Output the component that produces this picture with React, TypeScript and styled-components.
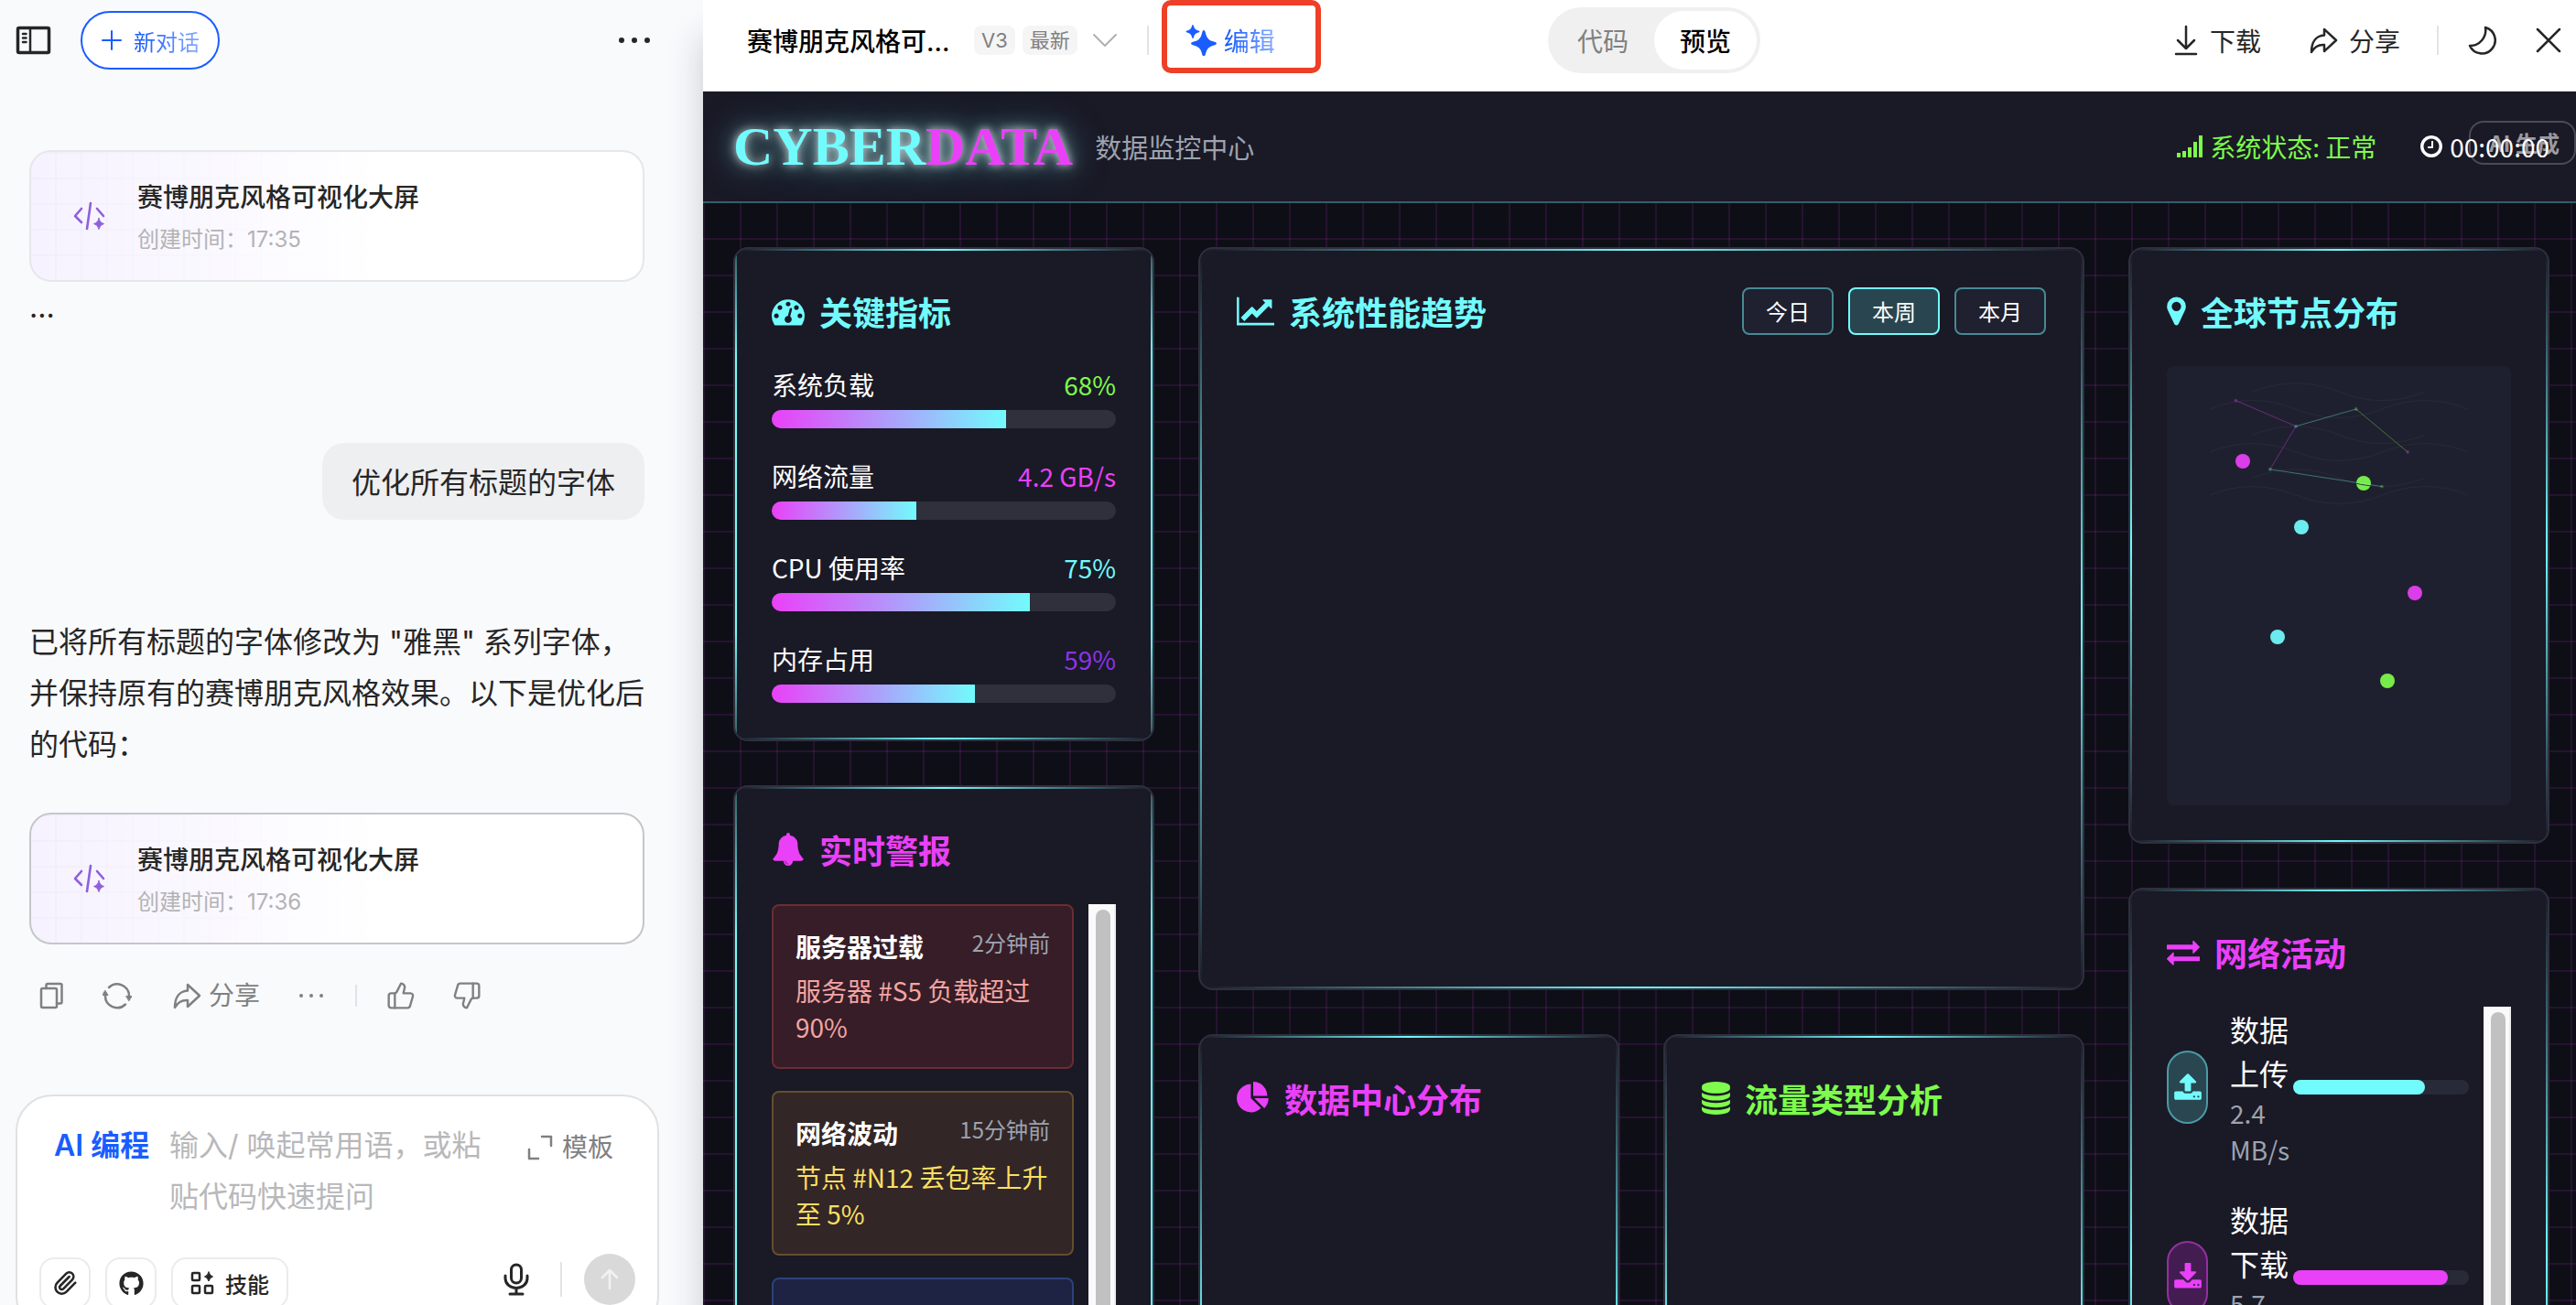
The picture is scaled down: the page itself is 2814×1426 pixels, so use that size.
import React from "react";
import styled, { createGlobalStyle } from "styled-components";
import { Paperclip, ThumbsDown, ThumbsUp } from "lucide-react";
import { FaGithub } from "react-icons/fa";

const UI_FONT = `Inter, "Noto Sans CJK SC", sans-serif`;
const DASH_FONT = `"Noto Sans CJK SC", "Noto Sans", sans-serif`;

const c = {
  cyan: "#72fbfd",
  pink: "#ea40f8",
  green: "#7efb4c",
  purple: "#8b33e8",
  card: "#1a1926",
  blue: "#1a5dff",
};

const GlobalStyle = createGlobalStyle`
  *, *::before, *::after { box-sizing: border-box; }
  body { margin: 0; font-family: ${UI_FONT}; color: #262626; overflow: hidden; }
  button, textarea { font: inherit; color: inherit; }
  button { background: none; border: 0; padding: 0; cursor: pointer; }
  h1, h2, h3, p, ul { margin: 0; padding: 0; }
  ul { list-style: none; }
  svg { display: block; flex: none; }
`;

const Shell = styled.div`
  display: flex;
  height: 100vh;
  overflow: hidden;
  background: #f9fafc;
`;

/* ---------- chat column ---------- */

const Chat = styled.aside`
  flex: 0 0 768px;
  display: flex;
  flex-direction: column;
`;

const ChatBar = styled.header`
  flex: none;
  display: flex;
  align-items: center;
  gap: 32px;
  height: 88px;
  padding: 0 58px 0 16px;
`;

const NewChat = styled.button`
  display: flex;
  align-items: center;
  gap: 12px;
  height: 64px;
  padding: 0 20px;
  border: 2px solid ${c.blue};
  border-radius: 32px;
  background: #fff;
  color: ${c.blue};
  font-size: 24px;
`;

const FadeText = styled.span`
  background: linear-gradient(90deg, ${c.blue} 10%, #86abff);
  background-clip: text;
  -webkit-background-clip: text;
  color: transparent;
`;

const PushRight = styled.div`
  margin-left: auto;
  display: flex;
`;

const Messages = styled.div`
  flex: none;
  display: flex;
  flex-direction: column;
  padding: 76px 64px 0 32px;
  font-size: 32px;
  line-height: 56px;
`;

const FileCard = styled.button<{ $active?: boolean }>`
  display: flex;
  align-items: center;
  gap: 34px;
  height: 144px;
  padding: 0 46px;
  border: 2px solid ${(p) => (p.$active ? "#c5c6c9" : "#e6e7ea")};
  border-radius: 24px;
  background:
    linear-gradient(90deg, rgba(255, 255, 255, 0) 0, #fff 380px),
    repeating-linear-gradient(90deg, transparent 0 26px, #f1eefb 26px 28px),
    repeating-linear-gradient(0deg, transparent 0 26px, #f1eefb 26px 28px),
    #f6f2ff;
  background-clip: padding-box;
  text-align: left;
`;

const FileText = styled.span`
  display: flex;
  flex-direction: column;
  gap: 8px;
  padding-top: 4px;
`;

const FileName = styled.strong`
  font-size: 28px;
  line-height: 40px;
  font-weight: 500;
`;

const FileMeta = styled.span`
  font-size: 24px;
  line-height: 36px;
  color: #b3b3b5;
`;

const Bubble = styled.p`
  align-self: flex-end;
  margin-top: 120px;
  padding: 16px 32px 12px;
  border-radius: 24px;
  background: #eeeff1;
`;

const Reply = styled.p`
  margin: 106px 0 46px;
`;

const MessageActions = styled.div`
  display: flex;
  align-items: center;
  gap: 24px;
  height: 56px;
  margin-top: 28px;
  color: #808080;
`;

const IconButton = styled.button`
  display: flex;
  align-items: center;
  justify-content: center;
  min-width: 48px;
  height: 48px;
`;

const ShareSmall = styled(IconButton)`
  gap: 8px;
  padding: 0 8px 0 12px;
  font-size: 28px;
`;

const Divider = styled.span<{ $h: number }>`
  flex: none;
  width: 2px;
  height: ${(p) => p.$h}px;
  background: #e2e3e6;
`;

const Composer = styled.form`
  flex: none;
  display: flex;
  flex-direction: column;
  gap: 34px;
  margin: 80px 48px 0 17px;
  padding: 26px 24px 24px;
  border: 2px solid #e0e1e3;
  border-radius: 40px;
  background: #fff;
`;

const ComposerInput = styled.div`
  display: flex;
  align-items: flex-start;
  padding: 0 24px 0 16px;
  font-size: 32px;
  line-height: 56px;
`;

const ModeLabel = styled.label`
  flex: none;
  width: 126px;
  color: ${c.blue};
  font-weight: 600;
  white-space: nowrap;
`;

const Prompt = styled.textarea`
  width: 360px;
  height: 112px;
  padding: 0;
  border: 0;
  outline: 0;
  resize: none;
  overflow: hidden;
  background: transparent;
  &::placeholder { color: #b8b8ba; opacity: 1; }
`;

const Template = styled.button`
  display: flex;
  align-items: center;
  gap: 8px;
  margin-left: auto;
  color: #808080;
  font-size: 28px;
  line-height: 60px;
  white-space: nowrap;
`;

const ComposerTools = styled.div`
  display: flex;
  align-items: flex-end;
  gap: 16px;
  height: 60px;
`;

const ToolButton = styled.button<{ $wide?: boolean }>`
  display: flex;
  align-items: center;
  justify-content: center;
  gap: 12px;
  width: ${(p) => (p.$wide ? 128 : 56)}px;
  height: 56px;
  border: 2px solid #ebebed;
  border-radius: 16px;
  font-size: 24px;
  font-weight: 500;
`;

const VoiceGroup = styled.div`
  align-self: flex-start;
  display: flex;
  align-items: center;
  gap: 24px;
  margin-left: auto;
`;

const Send = styled.button`
  display: flex;
  align-items: center;
  justify-content: center;
  width: 56px;
  height: 56px;
  border-radius: 50%;
  background: #d9d9d9;
  color: #f2f2f2;
`;

/* ---------- preview column ---------- */

const Workspace = styled.main`
  position: relative;
  flex: 1;
  min-width: 0;
  display: flex;
  flex-direction: column;
  box-shadow: 0 40px 36px rgba(30, 36, 60, 0.22);
`;

const Toolbar = styled.header`
  flex: none;
  display: grid;
  grid-template-columns: 1fr auto 1fr;
  align-items: center;
  height: 100px;
  padding: 0 16px 12px 48px;
  border-bottom: 1px solid #e8e9ee;
  background: #fff;
  font-size: 28px;
`;

const ToolbarSide = styled.div<{ $end?: boolean }>`
  display: flex;
  align-items: center;
  height: 88px;
  justify-content: ${(p) => (p.$end ? "flex-end" : "flex-start")};
  gap: ${(p) => (p.$end ? 32 : 8)}px;
`;

const DocTitle = styled.h1`
  width: 240px;
  color: #000;
  font-size: 28px;
  font-weight: 500;
`;

const Tag = styled.span`
  padding: 0 8px;
  border-radius: 8px;
  background: #f5f5f5;
  color: #808080;
  font-size: 22px;
  line-height: 32px;
`;

const Chevron = styled.button`
  margin: 0 24px 0 8px;
  padding: 4px 0;
  color: #b0b0b0;
`;

const EditButton = styled.button`
  align-self: flex-start;
  display: flex;
  align-items: center;
  gap: 8px;
  width: 174px;
  height: 80px;
  margin-left: 6px;
  padding: 8px 0 0 20px;
  border: 6px solid #ee4027;
  border-radius: 10px;
  color: ${c.blue};
`;

const Segmented = styled.div`
  display: flex;
  padding: 4px;
  border-radius: 36px;
  background: #f0f0f0;
`;

const Segment = styled.button<{ $on?: boolean }>`
  width: 112px;
  height: 64px;
  border-radius: 32px;
  background: ${(p) => (p.$on ? "#fff" : "transparent")};
  color: ${(p) => (p.$on ? "#000" : "#808080")};
  font-weight: ${(p) => (p.$on ? 500 : 400)};
`;

const ActionButton = styled.button`
  display: flex;
  align-items: center;
  gap: 12px;
  margin-left: 12px;
  padding-right: 8px;
`;

const CloseButton = styled.button`
  margin-left: 10px;
`;

const Preview = styled.section`
  position: relative;
  flex: 1;
  min-height: 0;
  overflow: hidden;
  background-color: #0e0e17;
  background-image:
    linear-gradient(rgba(234, 64, 248, 0.11) 2px, transparent 2px),
    linear-gradient(90deg, rgba(234, 64, 248, 0.11) 2px, transparent 2px);
  background-size: 40px 40px;
  color: #fff;
  font-family: ${DASH_FONT};
  font-size: 28px;
  line-height: 40px;
`;

const DashHeader = styled.header`
  display: flex;
  align-items: center;
  height: 122px;
  padding: 0 29px 0 33px;
  border-bottom: 2px solid #355e6c;
  background: ${c.card};
`;

const Logo = styled.h2`
  margin-right: 24px;
  color: ${c.cyan};
  font-family: "Liberation Serif", serif;
  font-size: 60px;
  line-height: 72px;
  font-weight: 700;
  text-shadow:
    0 0 10px rgba(255, 255, 255, 0.7),
    0 0 20px rgba(190, 255, 255, 0.5),
    0 0 40px rgba(114, 251, 253, 0.55);
  span { color: ${c.pink}; }
`;

const Subtitle = styled.span`
  color: #9ca3af;
  font-size: 29px;
`;

const StatusGroup = styled.div`
  position: relative;
  z-index: 1;
  display: flex;
  gap: 48px;
  margin-left: auto;
`;

const Status = styled.span<{ $color: string }>`
  display: flex;
  align-items: center;
  gap: 8px;
  color: ${(p) => p.$color};
`;

const AiBadge = styled.span`
  position: absolute;
  top: 32px;
  right: 0;
  height: 48px;
  padding: 0 16px 0 20px;
  border: 2px solid #4b4b58;
  border-radius: 16px;
  color: #9b9ba1;
  font-size: 24px;
  font-weight: 700;
  line-height: 44px;
`;

const Grid = styled.div`
  display: grid;
  grid-template-columns: 1fr calc(50% - 24px) 1fr;
  gap: 48px;
  align-items: start;
  padding: 48px 29px 48px 33px;
`;

const Column = styled.div`
  display: flex;
  flex-direction: column;
  gap: 48px;
  min-width: 0;
`;

const Pair = styled.div`
  display: grid;
  grid-template-columns: 1fr 1fr;
  gap: 48px;
`;

const Card = styled.section<{ $solid?: boolean }>`
  --h: linear-gradient(90deg, transparent, ${c.cyan}, transparent);
  --v: ${(p) =>
    p.$solid
      ? `linear-gradient(rgba(114,251,253,.3), ${c.cyan} 22%, ${c.cyan} 78%, rgba(114,251,253,.3))`
      : `linear-gradient(transparent, ${c.cyan}, transparent)`};
  min-width: 0;
  padding: 40px;
  border: 2px solid #2f2f3d;
  border-radius: 16px;
  background:
    var(--h) top / 100% 2px no-repeat,
    var(--h) bottom / 100% 2px no-repeat,
    var(--v) left / 2px 100% no-repeat,
    var(--v) right / 2px 100% no-repeat,
    ${c.card};
  background-origin: padding-box;
`;

const CardHead = styled.div`
  display: flex;
  align-items: center;
  height: 56px;
  margin-bottom: 32px;
`;

const CardTitle = styled.h3<{ $color: string }>`
  display: flex;
  align-items: center;
  gap: 16px;
  color: ${(p) => p.$color};
  font-size: 36px;
  line-height: 56px;
  font-weight: 700;
`;

const MetricList = styled.ul`
  display: flex;
  flex-direction: column;
  gap: 32px;
`;

const MetricLabel = styled.div<{ $color: string }>`
  display: flex;
  justify-content: space-between;
  margin-bottom: 8px;
  span:last-child { color: ${(p) => p.$color}; }
`;

const Track = styled.div`
  height: 20px;
  overflow: hidden;
  border-radius: 10px;
  background: #302f3c;
`;

const Fill = styled.div`
  height: 100%;
  background: linear-gradient(90deg, ${c.pink}, ${c.cyan});
`;

const Scroller = styled.div<{ $h: number }>`
  display: flex;
  gap: 16px;
  height: ${(p) => p.$h}px;
  overflow: hidden;
`;

const ScrollBody = styled.ul<{ $gap: number }>`
  flex: 1;
  min-width: 0;
  display: flex;
  flex-direction: column;
  gap: ${(p) => p.$gap}px;
`;

const ScrollTrack = styled.div`
  flex: 0 0 30px;
  padding: 6px 4px 6px 8px;
  border-right: 2px solid #ececec;
  background: #fafafa;
`;

const ScrollThumb = styled.div`
  width: 16px;
  height: 92%;
  border-radius: 8px;
  background: #c1c1c1;
`;

const Alert = styled.li<{ $bg: string; $line: string }>`
  padding: 24px;
  border: 2px solid ${(p) => p.$line};
  border-radius: 8px;
  background: ${(p) => p.$bg};
`;

const AlertHead = styled.div`
  display: flex;
  justify-content: space-between;
  margin-bottom: 8px;
`;

const AlertName = styled.strong`
  font-weight: 700;
`;

const AlertTime = styled.time`
  color: #9ca3af;
  font-size: 24px;
  line-height: 32px;
`;

const AlertText = styled.p<{ $color: string }>`
  color: ${(p) => p.$color};
`;

const Ranges = styled.div`
  display: flex;
  gap: 16px;
  margin-left: auto;
`;

const RangeButton = styled.button<{ $on?: boolean }>`
  width: 100px;
  height: 52px;
  border: 2px solid ${(p) => (p.$on ? c.cyan : "#478a93")};
  border-radius: 8px;
  background: ${(p) => (p.$on ? "#294650" : "#1f2030")};
  font-size: 24px;
  line-height: 32px;
`;

const ChartArea = styled.div<{ $h: number }>`
  height: ${(p) => p.$h}px;
`;

const MapBox = styled.div`
  position: relative;
  height: 480px;
  border-radius: 8px;
  background: #1f202f;
`;

const MapLines = styled.svg`
  position: relative;
  z-index: 1;
  width: 100%;
`;

const Pin = styled.span`
  position: absolute;
  width: 16px;
  height: 16px;
  border-radius: 50%;
  opacity: 0.93;
`;

const NetItem = styled.li`
  display: flex;
  align-items: center;
`;

const Pill = styled.span<{ $color: string; $bg: string; $line: string }>`
  flex: none;
  display: flex;
  align-items: center;
  justify-content: center;
  width: 45px;
  height: 80px;
  margin-right: 24px;
  border: 2px solid ${(p) => p.$line};
  border-radius: 24px;
  background: ${(p) => p.$bg};
  color: ${(p) => p.$color};
`;

const NetText = styled.div`
  flex: 1;
  min-width: 0;
`;

const NetName = styled.p`
  font-size: 32px;
  line-height: 48px;
`;

const NetRate = styled.p`
  color: #9ca3af;
`;

const NetTrack = styled.div`
  flex: 0 0 192px;
  height: 16px;
  border-radius: 8px;
  background: #282a38;
`;

const NetFill = styled.div<{ $color: string }>`
  height: 100%;
  border-radius: 8px;
  background: ${(p) => p.$color};
`;

/* ---------- icons ---------- */

const glyphs = {
  gauge: ["0 0 1792 1792", "M384 1152q0-53-37.5-90.5t-90.5-37.5-90.5 37.5-37.5 90.5 37.5 90.5 90.5 37.5 90.5-37.5 37.5-90.5zm192-448q0-53-37.5-90.5t-90.5-37.5-90.5 37.5-37.5 90.5 37.5 90.5 90.5 37.5 90.5-37.5 37.5-90.5zm428 481l101-382q6-26-7.5-48.5t-38.5-29.5-48 6.5-30 39.5l-101 382q-60 5-107 43.5t-63 98.5q-20 77 20 146t117 89 146-20 89-117q16-60-6-117t-72-91zm660-33q0-53-37.5-90.5t-90.5-37.5-90.5 37.5-37.5 90.5 37.5 90.5 90.5 37.5 90.5-37.5 37.5-90.5zm-640-640q0-53-37.5-90.5t-90.5-37.5-90.5 37.5-37.5 90.5 37.5 90.5 90.5 37.5 90.5-37.5 37.5-90.5zm448 192q0-53-37.5-90.5t-90.5-37.5-90.5 37.5-37.5 90.5 37.5 90.5 90.5 37.5 90.5-37.5 37.5-90.5zm320 448q0 261-141 483-19 29-54 29h-1402q-35 0-54-29-141-221-141-483 0-182 71-348t191-286 286-191 348-71 348 71 286 191 191 286 71 348z"],
  bell: ["0 0 1792 1792", "M912 1696q0-16-16-16-59 0-101.5-42.5t-42.5-101.5q0-16-16-16t-16 16q0 73 51.5 124.5t124.5 51.5q16 0 16-16zm816-288q0 52-38 90t-90 38h-448q0 106-75 181t-181 75-181-75-75-181h-448q-52 0-90-38t-38-90q50-42 91-88t85-119.5 74.5-158.5 50-206 19.5-260q0-152 117-282.5t307-158.5q-8-19-8-39 0-40 28-68t68-28 68 28 28 68q0 20-8 39 190 28 307 158.5t117 282.5q0 139 19.5 260t50 206 74.5 158.5 85 119.5 91 88z"],
  line: ["0 0 2048 1792", "M2048 1536v128h-2048v-1536h128v1408h1920zm-128-1248v435q0 21-19.5 29.5t-35.5-7.5l-121-121-633 633q-10 10-23 10t-23-10l-233-233-416 416-192-192 585-585q10-10 23-10t23 10l233 233 464-464-121-121q-16-16-7.5-35.5t29.5-19.5h435q14 0 23 9t9 23z"],
  marker: ["0 0 1024 1792", "M768 640q0-106-75-181t-181-75-181 75-75 181 75 181 181 75 181-75 75-181zm256 0q0 109-33 179l-364 774q-16 33-47.5 52t-67.5 19-67.5-19-46.5-52l-365-774q-33-70-33-179 0-212 150-362t362-150 362 150 150 362z"],
  exchange: ["0 0 1792 1792", "M1792 1184v192q0 13-9.5 22.5t-22.5 9.5h-1376v192q0 13-9.5 22.5t-22.5 9.5q-12 0-24-10l-319-320q-9-9-9-22 0-14 9-23l320-320q9-9 23-9 13 0 22.5 9.5t9.5 22.5v192h1376q13 0 22.5 9.5t9.5 22.5zm0-544q0 14-9 23l-320 320q-9 9-23 9-13 0-22.5-9.5t-9.5-22.5v-192h-1376q-13 0-22.5-9.5t-9.5-22.5v-192q0-13 9.5-22.5t22.5-9.5h1376v-192q0-14 9-23t23-9q12 0 24 10l319 319q9 9 9 23z"],
  pie: ["0 0 1792 1792", "M768 890l546 546q-106 108-247.5 168t-298.5 60q-209 0-385.5-103t-279.5-279.5-103-385.5 103-385.5 279.5-279.5 385.5-103v762zm187 6h773q0 157-60 298.5t-168 247.5zm709-128h-768v-768q209 0 385.5 103t279.5 279.5 103 385.5z"],
  database: ["128 0 1536 1792", "M896 768q237 0 443-43t325-127v170q0 69-103 128t-280 93.5-385 34.5-385-34.5-280-93.5-103-128v-170q119 84 325 127t443 43zm0 768q237 0 443-43t325-127v170q0 69-103 128t-280 93.5-385 34.5-385-34.5-280-93.5-103-128v-170q119 84 325 127t443 43zm0-384q237 0 443-43t325-127v170q0 69-103 128t-280 93.5-385 34.5-385-34.5-280-93.5-103-128v-170q119 84 325 127t443 43zm0-1152q208 0 385 34.5t280 93.5 103 128v128q0 69-103 128t-280 93.5-385 34.5-385-34.5-280-93.5-103-128v-128q0-69 103-128t280-93.5 385-34.5z"],
  clock: ["128 0 1536 1792", "M1024 544v448q0 14-9 23t-23 9h-320q-14 0-23-9t-9-23v-64q0-14 9-23t23-9h224v-352q0-14 9-23t23-9h64q14 0 23 9t9 23zm416 352q0-148-73-273t-198-198-273-73-273 73-198 198-73 273 73 273 198 198 273 73 273-73 198-198 73-273zm224 0q0 209-103 385.5t-279.5 279.5-385.5 103-385.5-103-279.5-279.5-103-385.5 103-385.5 279.5-279.5 385.5-103 385.5 103 279.5 279.5 103 385.5z"],
  signal: ["0 0 1792 1792", "M0 1344h256v320h-256zM384 1216h256v448h-256zM768 960h256v704h-256zM1152 576h256v1088h-256zM1536 128h256v1536h-256z"],
  upload: ["64 0 1664 1792", "M1344 1472q0-26-19-45t-45-19-45 19-19 45 19 45 45 19 45-19 19-45zm256 0q0-26-19-45t-45-19-45 19-19 45 19 45 45 19 45-19 19-45zm128-224v320q0 40-28 68t-68 28h-1472q-40 0-68-28t-28-68v-320q0-40 28-68t68-28h427q21 56 70.5 92t110.5 36h256q61 0 110.5-36t70.5-92h427q40 0 68 28t28 68zm-325-648q-17 40-59 40h-256v448q0 26-19 45t-45 19h-256q-26 0-45-19t-19-45v-448h-256q-42 0-59-40-17-39 14-69l448-448q18-19 45-19t45 19l448 448q31 30 14 69z"],
  download: ["64 0 1664 1792", "M1344 1344q0-26-19-45t-45-19-45 19-19 45 19 45 45 19 45-19 19-45zm256 0q0-26-19-45t-45-19-45 19-19 45 19 45 45 19 45-19 19-45zm128-224v320q0 40-28 68t-68 28h-1472q-40 0-68-28t-28-68v-320q0-40 28-68t68-28h465l135 136q58 56 136 56t136-56l136-136h464q40 0 68 28t28 68zm-325-569q17 41-14 70l-448 448q-18 19-45 19t-45-19l-448-448q-31-29-14-70 17-39 59-39h256v-448q0-26 19-45t45-19h256q26 0 45 19t19 45v448h256q42 0 59 39z"],
} as const;

function Glyph({ name, size = 36 }: { name: keyof typeof glyphs; size?: number }) {
  const [box, d] = glyphs[name];
  const w = Math.round((Number(box.split(" ")[2]) / 1792) * size);
  return (
    <svg width={w} height={size} viewBox={box} fill="currentColor" aria-hidden="true">
      <path d={d} />
    </svg>
  );
}

type StrokeProps = { w?: number; h?: number; sw?: number; children: React.ReactNode };

function Stroke({ w = 32, h = 32, sw = 2.5, children }: StrokeProps) {
  return (
    <svg
      width={w}
      height={h}
      viewBox={`0 0 ${w} ${h}`}
      fill="none"
      stroke="currentColor"
      strokeWidth={sw}
      strokeLinecap="round"
      strokeLinejoin="round"
      aria-hidden="true"
    >
      {children}
    </svg>
  );
}

const ShareIcon = () => (
  <Stroke>
    <path d="M17 4 30 16 17 28V21C10 20.500 6 23.500 3 29 3 18 8 11 17 10.500Z" />
  </Stroke>
);

const Dots = ({ size, gap }: { size: number; gap: number }) => {
  const w = size + gap * 2;
  return (
    <svg width={w} height={size} viewBox={`0 0 ${w} ${size}`} fill="currentColor" aria-hidden="true">
      {[0, 1, 2].map((i) => (
        <circle key={i} cx={size / 2 + i * gap} cy={size / 2} r={size / 2} />
      ))}
    </svg>
  );
};

const CodeIcon = () => (
  <svg width="36" height="32" viewBox="0 0 36 32" fill="none" stroke="#8f5fdb" strokeWidth="2.600" strokeLinecap="round" strokeLinejoin="round" aria-hidden="true">
    <path d="M9 8 2 16l7 7M19 2l-4 28M26 8l7 8" />
    <path d="M28 18.500q1 5 5.500 6-4.500 1-5.500 6-1-5-5.500-6 4.500-1 5.500-6z" fill="#8f5fdb" strokeWidth="1" />
  </svg>
);

/* ---------- data ---------- */

const metrics = [
  { label: "系统负载", value: "68%", pct: 68, color: c.green },
  { label: "网络流量", value: "4.2 GB/s", pct: 42, color: c.pink },
  { label: "CPU 使用率", value: "75%", pct: 75, color: c.cyan },
  { label: "内存占用", value: "59%", pct: 59, color: c.purple },
];

const alerts = [
  { name: "服务器过载", time: "2分钟前", text: "服务器 #S5 负载超过 90%", color: "#f2a5a3", bg: "#371d27", line: "#6b2d32" },
  { name: "网络波动", time: "15分钟前", text: "节点 #N12 丢包率上升至 5%", color: "#fadf62", bg: "#322627", line: "#664e2c" },
  { name: "", time: "", text: "", color: "#93c5fd", bg: "#1e2344", line: "#2b4379" },
];

const pins = [
  { left: 20, top: 20, color: c.pink },
  { left: 55, top: 25, color: c.green },
  { left: 37, top: 35, color: c.cyan },
  { left: 70, top: 50, color: c.pink },
  { left: 30, top: 60, color: c.cyan },
  { left: 62, top: 70, color: c.green },
];

const network = [
  { name: "数据上传", rate: "2.4 MB/s", pct: 75, color: c.cyan, bg: "#2a4651", line: "#4b9aa5", icon: "upload" as const },
  { name: "数据下载", rate: "5.7 MB/s", pct: 88, color: c.pink, bg: "#431d51", line: "#93309e", icon: "download" as const },
];

const nodes: [number, number, string][] = [
  [80, 40, c.pink],
  [150, 70, c.cyan],
  [220, 50, c.green],
  [280, 100, c.pink],
  [120, 120, c.cyan],
  [250, 140, c.green],
];

const links: [number, number, string][] = [
  [0, 1, c.pink],
  [1, 2, c.cyan],
  [2, 3, c.green],
  [1, 4, c.pink],
  [4, 5, c.cyan],
];

/* ---------- views ---------- */

function File({ time, active }: { time: string; active?: boolean }) {
  return (
    <FileCard type="button" $active={active}>
      <CodeIcon />
      <FileText>
        <FileName>赛博朋克风格可视化大屏</FileName>
        <FileMeta>创建时间：{time}</FileMeta>
      </FileText>
    </FileCard>
  );
}

function ChatPanel() {
  return (
    <Chat>
      <ChatBar>
        <button type="button" aria-label="侧边栏">
          <Stroke w={40} h={34} sw={3.5}>
            <rect x="3.500" y="3.500" width="34" height="27" rx="1.500" />
            <path d="M17 4v26" strokeWidth="2.500" />
            <path d="M9 10h3.500M9 14.500h3.500M9 19h3.500" strokeWidth="2.500" />
          </Stroke>
        </button>
        <NewChat type="button">
          <Stroke w={24} h={24} sw={2}>
            <path d="M12 2v20M2 12h20" />
          </Stroke>
          <FadeText>新对话</FadeText>
        </NewChat>
        <PushRight>
          <button type="button" aria-label="更多">
            <Dots size={6} gap={14} />
          </button>
        </PushRight>
      </ChatBar>
      <Messages>
        <File time="17:35" />
        <p>...</p>
        <Bubble>优化所有标题的字体</Bubble>
        <Reply>已将所有标题的字体修改为 "雅黑" 系列字体，并保持原有的赛博朋克风格效果。以下是优化后的代码：</Reply>
        <File time="17:36" active />
        <MessageActions>
          <IconButton type="button" aria-label="复制">
            <Stroke sw={2.5}>
              <rect x="5" y="8" width="17" height="21" rx="1.500" />
              <path d="M10.500 8V4.500Q10.500 3 12 3h14q1.500 0 1.500 1.500V23q0 1.500-1.500 1.500h-4" />
            </Stroke>
          </IconButton>
          <IconButton type="button" aria-label="重新生成">
            <Stroke sw={2.5}>
              <path d="M7 7A13 13 0 0 1 29 16M25 25.500A13 13 0 0 1 3 16" />
              <path d="M26 16.500h6l-3 5zM0 15.500h6l-3-5z" fill="currentColor" strokeWidth="1" />
            </Stroke>
          </IconButton>
          <ShareSmall type="button">
            <ShareIcon />
            分享
          </ShareSmall>
          <IconButton type="button" aria-label="更多操作">
            <Dots size={4} gap={11} />
          </IconButton>
          <Divider $h={24} />
          <IconButton type="button" aria-label="赞">
            <ThumbsUp size={32} strokeWidth={1.8} />
          </IconButton>
          <IconButton type="button" aria-label="踩">
            <ThumbsDown size={32} strokeWidth={1.8} />
          </IconButton>
        </MessageActions>
      </Messages>
      <Composer onSubmit={(e) => e.preventDefault()}>
        <ComposerInput>
          <ModeLabel htmlFor="prompt">AI 编程</ModeLabel>
          <Prompt id="prompt" placeholder="输入/ 唤起常用语，或粘贴代码快速提问" />
          <Template type="button">
            <Stroke sw={2.5}>
              <path d="M18 4h10v10M4 18v10h10" />
            </Stroke>
            模板
          </Template>
        </ComposerInput>
        <ComposerTools>
          <ToolButton type="button" aria-label="附件">
            <Paperclip size={28} strokeWidth={2.2} />
          </ToolButton>
          <ToolButton type="button" aria-label="GitHub">
            <FaGithub size={27} />
          </ToolButton>
          <ToolButton type="button" $wide>
            <Stroke w={26} h={26} sw={2.5}>
              <rect x="2" y="2" width="8" height="8" rx="1" />
              <rect x="2" y="16" width="8" height="8" rx="1" />
              <rect x="16" y="16" width="8" height="8" rx="1" />
              <path d="M20 1q1 4 4.500 5-3.500 1-4.500 5-1-4-4.500-5 3.500-1 4.500-5z" fill="currentColor" strokeWidth="1" />
            </Stroke>
            技能
          </ToolButton>
          <VoiceGroup>
            <IconButton type="button" aria-label="语音">
              <Stroke w={28} h={36} sw={3}>
                <rect x="8.500" y="2" width="11" height="20" rx="5.500" />
                <path d="M2 14v3a12 10.500 0 0 0 24 0v-3M14 28v5M7 34h14" />
              </Stroke>
            </IconButton>
            <Divider $h={38} />
            <Send type="submit" aria-label="发送">
              <Stroke w={24} h={24} sw={2.5}>
                <path d="M12 22V2M4 10l8-8 8 8" />
              </Stroke>
            </Send>
          </VoiceGroup>
        </ComposerTools>
      </Composer>
    </Chat>
  );
}

function TopToolbar() {
  return (
    <Toolbar>
      <ToolbarSide>
        <DocTitle>赛博朋克风格可...</DocTitle>
        <Tag>V3</Tag>
        <Tag>最新</Tag>
        <Chevron type="button" aria-label="选择版本">
          <Stroke w={28} h={16} sw={2}>
            <path d="M2 2l12 12L26 2" />
          </Stroke>
        </Chevron>
        <Divider $h={32} />
        <EditButton type="button">
          <svg width="34" height="34" viewBox="0 0 34 34" fill="currentColor" aria-hidden="true">
            <path d="M20 6q1.500 0 2 3.500 1.500 7.500 9 9 3 .5 3 2t-3 2q-7.500 1.500-9 9-.5 3-2 3t-2-3q-1.500-7.500-9-9-3-.5-3-2t3-2q7.500-1.500 9-9 .5-3.500 2-3.500z" />
            <path d="M8 0q.8 0 1 1.500.8 4 5 5 1.500.2 1.500 1t-1.500 1q-4.200 1-5 5-.2 1.500-1 1.500t-1-1.500q-.8-4-5-5-1.500-.2-1.500-1t1.500-1q4.200-1 5-5 .2-1.500 1-1.500z" />
          </svg>
          <FadeText>编辑</FadeText>
        </EditButton>
      </ToolbarSide>
      <Segmented>
        <Segment type="button">代码</Segment>
        <Segment type="button" $on>
          预览
        </Segment>
      </Segmented>
      <ToolbarSide $end>
        <ActionButton type="button">
          <Stroke w={28} h={34} sw={2.5}>
            <path d="M14 2v24M5 17l9 9 9-9M3 32h22" />
          </Stroke>
          下载
        </ActionButton>
        <ActionButton type="button">
          <ShareIcon />
          分享
        </ActionButton>
        <Divider $h={32} />
        <button type="button" aria-label="深色模式">
          <Stroke sw={2.5}>
            <path d="M19 2A14.500 14.500 0 1 1 2 22 17 17 0 0 0 19 2z" />
          </Stroke>
        </button>
        <CloseButton type="button" aria-label="关闭">
          <Stroke w={28} h={28} sw={2.5}>
            <path d="M2 2l24 24M26 2L2 26" />
          </Stroke>
        </CloseButton>
      </ToolbarSide>
    </Toolbar>
  );
}

function NodeMap() {
  return (
    <MapBox>
      <MapLines viewBox="0 0 400 200" fill="none" aria-hidden="true">
        <g stroke="#2a2b3a">
          {[50, 100, 150].map((y) => (
            <path key={y} d={`M50 ${y}Q100 ${y - 20} 150 ${y}T250 ${y}T350 ${y}`} />
          ))}
          {[30, 80, 130].map((y) => (
            <path key={y} d={`M100 ${y}Q150 ${y - 20} 200 ${y}T300 ${y}`} />
          ))}
        </g>
        {links.map(([a, b, color]) => (
          <line key={`${a}-${b}`} x1={nodes[a][0]} y1={nodes[a][1]} x2={nodes[b][0]} y2={nodes[b][1]} stroke={color} opacity="0.4" />
        ))}
        {nodes.map(([x, y, color]) => (
          <circle key={`${x}-${y}`} cx={x} cy={y} r="2" fill={color} opacity="0.3" />
        ))}
      </MapLines>
      {pins.map((p) => (
        <Pin key={`${p.left}-${p.top}`} style={{ left: `${p.left}%`, top: `${p.top}%`, background: p.color }} />
      ))}
    </MapBox>
  );
}

function Title({ icon, color, children }: { icon: keyof typeof glyphs; color: string; children: React.ReactNode }) {
  return (
    <CardTitle $color={color}>
      <Glyph name={icon} />
      {children}
    </CardTitle>
  );
}

function Dashboard() {
  return (
    <Preview>
      <AiBadge>AI 生成</AiBadge>
      <DashHeader>
        <Logo>
          CYBER<span>DATA</span>
        </Logo>
        <Subtitle>数据监控中心</Subtitle>
        <StatusGroup>
          <Status $color={c.green}>
            <Glyph name="signal" size={28} />
            系统状态: 正常
          </Status>
          <Status $color="#fff">
            <Glyph name="clock" size={28} />
            00:00:00
          </Status>
        </StatusGroup>
      </DashHeader>
      <Grid>
        <Column>
          <Card $solid>
            <CardHead>
              <Title icon="gauge" color={c.cyan}>关键指标</Title>
            </CardHead>
            <MetricList>
              {metrics.map((m) => (
                <li key={m.label}>
                  <MetricLabel $color={m.color}>
                    <span>{m.label}</span>
                    <span>{m.value}</span>
                  </MetricLabel>
                  <Track>
                    <Fill style={{ width: `${m.pct}%` }} />
                  </Track>
                </li>
              ))}
            </MetricList>
          </Card>
          <Card $solid>
            <CardHead>
              <Title icon="bell" color={c.pink}>实时警报</Title>
            </CardHead>
            <Scroller $h={560}>
              <ScrollBody $gap={24}>
                {alerts.map((a) => (
                  <Alert key={a.bg} $bg={a.bg} $line={a.line}>
                    <AlertHead>
                      <AlertName>{a.name}</AlertName>
                      <AlertTime>{a.time}</AlertTime>
                    </AlertHead>
                    <AlertText $color={a.color}>{a.text}</AlertText>
                  </Alert>
                ))}
              </ScrollBody>
              <ScrollTrack>
                <ScrollThumb />
              </ScrollTrack>
            </Scroller>
          </Card>
        </Column>
        <Column>
          <Card>
            <CardHead>
              <Title icon="line" color={c.cyan}>系统性能趋势</Title>
              <Ranges>
                <RangeButton type="button">今日</RangeButton>
                <RangeButton type="button" $on>
                  本周
                </RangeButton>
                <RangeButton type="button">本月</RangeButton>
              </Ranges>
            </CardHead>
            <ChartArea $h={640} />
          </Card>
          <Pair>
            <Card>
              <CardHead>
                <Title icon="pie" color={c.pink}>数据中心分布</Title>
              </CardHead>
              <ChartArea $h={512} />
            </Card>
            <Card>
              <CardHead>
                <Title icon="database" color={c.green}>流量类型分析</Title>
              </CardHead>
              <ChartArea $h={512} />
            </Card>
          </Pair>
        </Column>
        <Column>
          <Card>
            <CardHead>
              <Title icon="marker" color={c.cyan}>全球节点分布</Title>
            </CardHead>
            <NodeMap />
          </Card>
          <Card>
            <CardHead>
              <Title icon="exchange" color={c.pink}>网络活动</Title>
            </CardHead>
            <Scroller $h={640}>
              <ScrollBody $gap={32}>
                {network.map((n) => (
                  <NetItem key={n.name}>
                    <Pill $color={n.color} $bg={n.bg} $line={n.line}>
                      <Glyph name={n.icon} size={32} />
                    </Pill>
                    <NetText>
                      <NetName>{n.name}</NetName>
                      <NetRate>{n.rate}</NetRate>
                    </NetText>
                    <NetTrack>
                      <NetFill $color={n.color} style={{ width: `${n.pct}%` }} />
                    </NetTrack>
                  </NetItem>
                ))}
              </ScrollBody>
              <ScrollTrack>
                <ScrollThumb />
              </ScrollTrack>
            </Scroller>
          </Card>
        </Column>
      </Grid>
    </Preview>
  );
}

export default function App() {
  return (
    <>
      <GlobalStyle />
      <Shell>
        <ChatPanel />
        <Workspace>
          <TopToolbar />
          <Dashboard />
        </Workspace>
      </Shell>
    </>
  );
}
